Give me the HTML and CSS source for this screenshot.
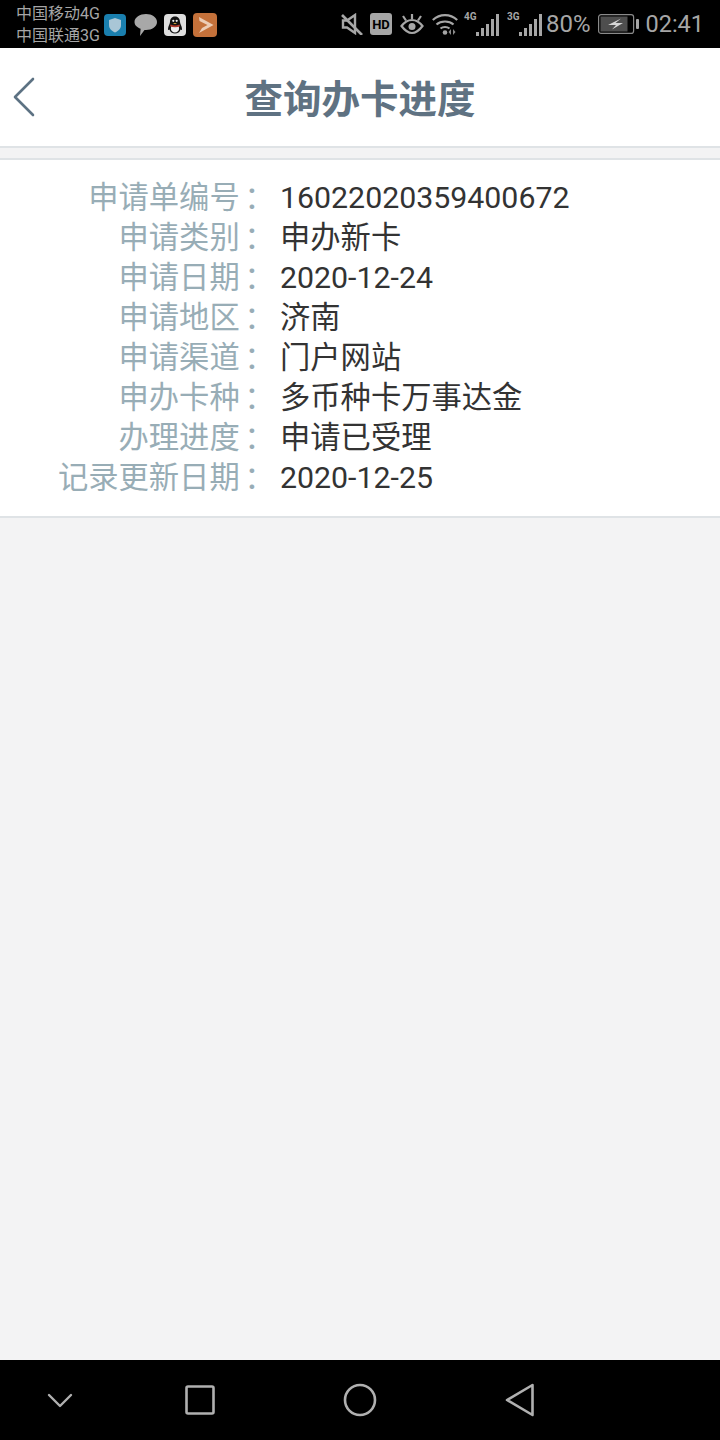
FILE: index.html
```html
<!DOCTYPE html>
<html lang="zh-CN">
<head>
<meta charset="utf-8">
<title>查询办卡进度</title>
<link rel="stylesheet" href="styles.css">
</head>
<body>
<div class="phone">
  <header class="status">
    <div class="status-left">
      <div class="carriers"><span>中国移动4G</span><span>中国联通3G</span></div>
      <svg class="app" width="22" height="22" viewBox="0 0 22 22"><rect width="22" height="22" rx="4" fill="#1a7fae"/><path d="M11 4l6 2v5c0 4-3 6-6 7.500-3-1.500-6-3.500-6-7.500V6z" fill="#a9c6d6"/></svg>
      <svg class="app" width="23" height="22" viewBox="0 0 23 22"><path d="M12 0c6 0 11 3.500 11 8s-5 8-11 8h-1.500L6 22l.6-7.200C3 13.500.5 11 .5 8 .5 3.500 6 0 12 0z" fill="#a8a8a8"/></svg>
      <svg class="app" width="22" height="22" viewBox="0 0 22 22"><rect width="22" height="22" rx="4" fill="#dedede"/><path d="M11 2.500c3.400 0 5 2.600 5 5.500 0 1.500 2 4.500 2 7 0 1.500-1 1-1.500.5-.5 2.500-3 4-5.500 4s-5-1.500-5.500-4c-.5.500-1.500 1-1.500-.5 0-2.500 2-5.500 2-7 0-2.900 1.600-5.500 5-5.500z" fill="#111"/><path d="M7.500 12c2 1 5 1 7 0 1 2 1.200 6-3.500 6.500-4.700-.5-4.500-4.500-3.500-6.500z" fill="#eee"/><path d="M6.500 10.500c3 1.400 6 1.400 9 0l.5 1.800c-3 1.400-7 1.400-10 0z" fill="#b3392c"/><circle cx="9.300" cy="6.800" r="1.100" fill="#eee"/><circle cx="12.700" cy="6.800" r="1.100" fill="#eee"/><path d="M9 9h4l-2 1.200z" fill="#d9a93a"/></svg>
      <svg class="app app-last" width="24" height="24" viewBox="0 0 24 24"><rect width="24" height="24" rx="4" fill="#c4713a"/><path d="M6 4L20.500 12 6 20 9 15l5.500-3L6.500 8z" fill="#eccdb5"/></svg>
    </div>
    <div class="status-right">
      <svg class="ic-mute" width="22" height="22" viewBox="0 0 22 22" fill="none" stroke="#a6a6a6" stroke-width="2.400"><path d="M2 7.500v7h4l8 5.500V2L6 7.500z"/><path d="M1 2l20 20" stroke-width="2.600"/></svg>
      <svg class="ic-hd" width="22" height="22" viewBox="0 0 22 22"><rect width="22" height="22" rx="3" fill="#a6a6a6"/><text x="11" y="16" class="hd-text">HD</text></svg>
      <svg class="ic-eye" width="24" height="22" viewBox="0 0 24 22" fill="none" stroke="#a6a6a6" stroke-width="2.200"><path d="M1.500 13c3-4 6.500-6 10.500-6s7.500 2 10.500 6c-3 4-6.500 7-10.500 7s-7.500-3-10.500-7z"/><circle cx="12" cy="13.500" r="3.500" fill="#a6a6a6" stroke="none"/><path d="M3 3l3 4.500M12 1v5M21 3l-3 4.500"/></svg>
      <svg class="ic-wifi" width="26" height="24" viewBox="0 0 26 24" fill="none" stroke="#a6a6a6" stroke-width="2.200"><path d="M.8 8c7-6.500 17.400-6.500 24.400 0M4.500 12.500c4.500-4 12.500-4 17 0M8.500 16.500c2.500-2 6.500-2 9 0"/><circle cx="13" cy="20.500" r="2.300" fill="#a6a6a6" stroke="none"/><path d="M19 17v6l-2.500-3zM21 17v6l2.500-3z" fill="#8a8a8a" stroke="none"/></svg>
      <div class="signal">
        <span class="net">4G</span>
        <svg width="23" height="22" viewBox="0 0 23 22" fill="#a6a6a6"><rect x="0" y="18" width="3" height="4"/><rect x="5" y="14" width="3" height="8"/><rect x="10" y="10" width="3" height="12"/><rect x="15" y="5" width="3" height="17"/><rect x="20" y="0" width="3" height="22"/></svg>
      </div>
      <div class="signal">
        <span class="net">3G</span>
        <svg width="23" height="22" viewBox="0 0 23 22" fill="#a6a6a6"><rect x="0" y="18" width="3" height="4"/><rect x="5" y="14" width="3" height="8"/><rect x="10" y="10" width="3" height="12"/><rect x="15" y="5" width="3" height="17"/><rect x="20" y="0" width="3" height="22"/></svg>
      </div>
      <span class="pct">80%</span>
      <svg class="ic-batt" width="41" height="20" viewBox="0 0 41 20"><rect x=".6" y=".6" width="35" height="18.800" rx="2.500" fill="none" stroke="#8a8a8a" stroke-width="1.200"/><rect x="2.500" y="2.500" width="27" height="15" fill="#4e4e4e"/><path d="M23 4.500L17.500 9H25L14 15.500 18 11h-8z" fill="#d6d6d6"/><rect x="38" y="5" width="3" height="10" rx="1" fill="#a6a6a6"/></svg>
      <span class="time">02:41</span>
    </div>
  </header>
  <nav class="titlebar">
    <svg class="back" width="22" height="40" viewBox="0 0 22 40" fill="none" stroke="#5d7283" stroke-width="2.600" stroke-linecap="round" stroke-linejoin="round"><path d="M20 2L2 20l18 18"/></svg>
    <h1>查询办卡进度</h1>
  </nav>
  <main class="content">
    <section class="card">
      <div class="row"><span class="key">申请单编号<span class="colon" lang="zh-Hant">：</span></span><span class="val">16022020359400672</span></div>
      <div class="row"><span class="key">申请类别<span class="colon" lang="zh-Hant">：</span></span><span class="val">申办新卡</span></div>
      <div class="row"><span class="key">申请日期<span class="colon" lang="zh-Hant">：</span></span><span class="val">2020-12-24</span></div>
      <div class="row"><span class="key">申请地区<span class="colon" lang="zh-Hant">：</span></span><span class="val">济南</span></div>
      <div class="row"><span class="key">申请渠道<span class="colon" lang="zh-Hant">：</span></span><span class="val">门户网站</span></div>
      <div class="row"><span class="key">申办卡种<span class="colon" lang="zh-Hant">：</span></span><span class="val">多币种卡万事达金</span></div>
      <div class="row"><span class="key">办理进度<span class="colon" lang="zh-Hant">：</span></span><span class="val">申请已受理</span></div>
      <div class="row"><span class="key">记录更新日期<span class="colon" lang="zh-Hant">：</span></span><span class="val">2020-12-25</span></div>
    </section>
  </main>
  <footer class="navbar">
    <svg width="28" height="18" viewBox="0 0 28 18" fill="none" stroke="#b0b0b0" stroke-width="2.400" stroke-linecap="round" stroke-linejoin="round"><path d="M3 4l11 11L25 4"/></svg>
    <svg width="30" height="30" viewBox="0 0 30 30" fill="none" stroke="#b0b0b0" stroke-width="2.600" stroke-linejoin="round"><rect x="1.500" y="1.500" width="27" height="27" rx="1.500"/></svg>
    <svg width="34" height="34" viewBox="0 0 34 34" fill="none" stroke="#b0b0b0" stroke-width="2.600"><circle cx="17" cy="17" r="15"/></svg>
    <svg width="30" height="34" viewBox="0 0 30 34" fill="none" stroke="#b0b0b0" stroke-width="2.600" stroke-linejoin="round"><path d="M27.500 2L2 17l25.500 15z"/></svg>
  </footer>
</div>
</body>
</html>
```
FILE: styles.css
```css
* { box-sizing: border-box; margin: 0; padding: 0; }
html, body { width: 720px; height: 1440px; overflow: hidden; }
body { font-family: Roboto, "Noto Sans CJK SC", sans-serif; background: #f3f3f4; }
.phone { width: 720px; height: 1440px; display: flex; flex-direction: column; }
.status { height: 48px; background: #000; display: flex; justify-content: space-between; align-items: center; padding: 0 16px; color: #a6a6a6; }
.status-left { display: flex; align-items: center; }
.carriers { display: flex; flex-direction: column; font-size: 16px; line-height: 22px; width: 88px; color: #a6a6a6; margin-top: 1px; white-space: nowrap; }
.app { margin-right: 7px; margin-top: 1px; }
.carriers + .app { margin-right: 8px; }
.app-last { margin-right: 0; }
.status-right { display: flex; align-items: center; }
.ic-mute { margin-right: 7px; }
.ic-hd { margin-right: 8px; }
.ic-eye { margin-right: 8px; }
.ic-wifi { margin-right: 6px; }
.hd-text { font: 700 13px Roboto, sans-serif; fill: #000; text-anchor: middle; }
.signal { display: flex; align-items: flex-end; margin-right: 8px; height: 24px; }
.signal + .signal { margin-right: 3px; }
.net { font: 700 10px/10px Roboto, sans-serif; align-self: flex-start; width: 12px; }
.pct { font-size: 24px; line-height: 28px; margin-right: 8px; margin-left: 1px; }
.ic-batt { margin-right: 6px; }
.time { font-size: 23.5px; line-height: 28px; }
.titlebar { height: 100px; background: #fff; border-bottom: 2px solid #dfe3e6; display: flex; align-items: center; justify-content: center; position: relative; }
.back { position: absolute; left: 13px; top: 29px; }
h1 { font-size: 38.5px; font-weight: 700; color: #5f7282; line-height: 50px; margin-top: 6px; }
.content { flex: 1; padding-top: 10px; }
.card { background: #fff; border-top: 2px solid #dfe3e6; border-bottom: 2px solid #dfe3e6; padding: 18px 0; }
.row { display: flex; height: 40px; align-items: center; font-size: 30.3px; line-height: 40px; }
.key { width: 270px; text-align: right; color: #98adb6; white-space: nowrap; }
.colon { font-family: "Noto Sans CJK TC", sans-serif; line-height: 0; vertical-align: -2px; margin-left: -3px; margin-right: 3px; }
.val { color: #333; margin-left: 10px; white-space: nowrap; }
.navbar { height: 80px; background: #000; display: flex; align-items: center; padding-left: 46px; }
.navbar svg:nth-child(1) { margin-right: 111px; }
.navbar svg:nth-child(2) { margin-right: 128px; }
.navbar svg:nth-child(3) { margin-right: 128px; }
```
